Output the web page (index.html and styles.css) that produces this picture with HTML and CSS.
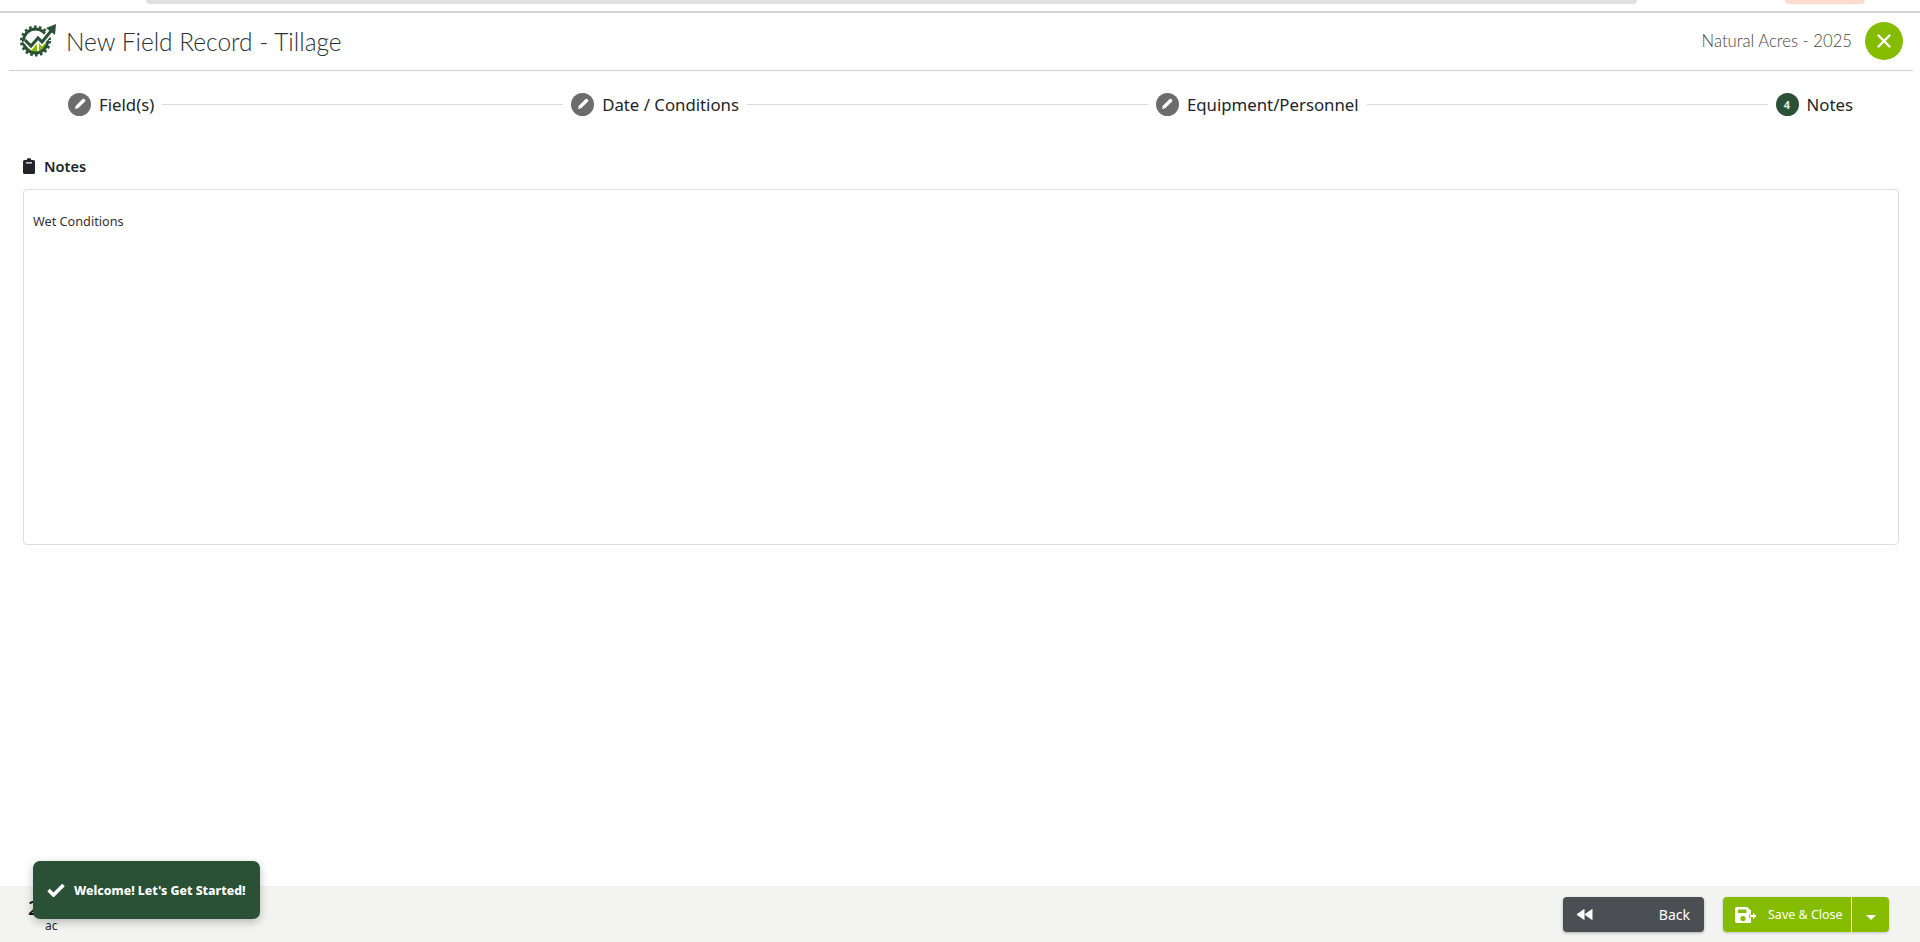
FILE: index.html
```html
<!DOCTYPE html>
<html lang="en">
<head>
    <meta charset="UTF-8">
    <title>New Field Record - Tillage</title>
    <link rel="stylesheet" href="styles.css">
</head>
<body>
<div class="container">
    <div class="top-strip">
        <span class="pill-grey"></span>
        <span class="pill-peach"></span>
    </div>
    <header>
        <svg class="logo" viewBox="0 0 40 34" width="40" height="34">
            <path d="M9 25 L9 20 L13 22 L16 24 L19 18 L19 30 Q13 30 9 25Z M21 17 L24 20 L27 17 L27 25 Q24 29 21 30Z" fill="#85bc00"/>
            <circle cx="17.5" cy="18" r="12" fill="none" stroke="#2a5135" stroke-width="3"/>
            <circle cx="17.5" cy="18" r="14.2" fill="none" stroke="#2a5135" stroke-width="2.6" stroke-dasharray="2.6 2.4"/>
            <path d="M7 17 L13 23 L20 15 L24 19 L33 8" fill="none" stroke="#fff" stroke-width="6"/>
            <path d="M7 17 L13 23 L20 15 L24 19 L33 8" fill="none" stroke="#2a5135" stroke-width="3"/>
            <path d="M28 5 L38 1 L37 12Z" fill="#2a5135"/>
        </svg>
        <h1>New Field Record - Tillage</h1>
        <span class="farm">Natural Acres - 2025</span>
        <button class="close-btn">
            <svg viewBox="0 0 16 16" width="16" height="16"><path d="M2.5 2.5 L13.5 13.5 M13.5 2.5 L2.5 13.5" stroke="#fff" stroke-width="2.4" stroke-linecap="round"/></svg>
        </button>
    </header>
    <nav class="stepper">
        <div class="step">
            <span class="step-icon"><svg viewBox="0 0 14 14" width="14" height="14"><path d="M2 12 L2.8 8.8 L9.6 2 Q10.4 1.3 11.2 2 L12 2.8 Q12.7 3.6 12 4.4 L5.2 11.2Z" fill="#fff"/></svg></span>
            <span>Field(s)</span>
        </div>
        <div class="step-line"></div>
        <div class="step">
            <span class="step-icon"><svg viewBox="0 0 14 14" width="14" height="14"><path d="M2 12 L2.8 8.8 L9.6 2 Q10.4 1.3 11.2 2 L12 2.8 Q12.7 3.6 12 4.4 L5.2 11.2Z" fill="#fff"/></svg></span>
            <span>Date / Conditions</span>
        </div>
        <div class="step-line"></div>
        <div class="step">
            <span class="step-icon"><svg viewBox="0 0 14 14" width="14" height="14"><path d="M2 12 L2.8 8.8 L9.6 2 Q10.4 1.3 11.2 2 L12 2.8 Q12.7 3.6 12 4.4 L5.2 11.2Z" fill="#fff"/></svg></span>
            <span>Equipment/Personnel</span>
        </div>
        <div class="step-line"></div>
        <div class="step">
            <span class="step-icon current">4</span>
            <span>Notes</span>
        </div>
    </nav>
    <main>
        <div class="section-title">
            <svg viewBox="0 0 12 16" width="12" height="16"><path d="M1.5 2 H3.6 Q4 0 6 0 Q8 0 8.4 2 H10.5 Q12 2 12 3.5 V14.5 Q12 16 10.5 16 H1.5 Q0 16 0 14.5 V3.5 Q0 2 1.5 2Z M3 4.2 V5.4 H9 V4.2Z" fill="#212529" fill-rule="evenodd"/></svg>
            <span>Notes</span>
        </div>
        <div class="notes-box">Wet Conditions</div>
    </main>
    <footer>
        <div class="acres">
            <span class="acres-num">2</span>
            <span class="acres-unit">ac</span>
        </div>
        <div class="actions">
            <button class="back-btn">
                <svg viewBox="0 0 16 12" width="17" height="13"><path d="M8 0.5 V11.5 L1 6.5 Q0.4 6 1 5.5Z M15.5 0.5 V11.5 L8.5 6.5 Q7.9 6 8.5 5.5Z" fill="#fff"/></svg>
                <span>Back</span>
            </button>
            <div class="save-group">
                <button class="save-btn">
                    <svg viewBox="0 0 22 16" width="22" height="16"><path d="M2 0 H12 L16 3.5 V7.5 H14 V10.5 H16 V16 H2 Q0 16 0 14 V2 Q0 0 2 0Z M3 2.5 V6 H11.5 V2.5Z M8 9 A2.6 2.6 0 1 0 8.01 9Z" fill="#fff" fill-rule="evenodd"/><path d="M15 8 H18 V6 L21.5 9 L18 12 V10 H15Z" fill="#fff"/></svg>
                    <span>Save &amp; Close</span>
                </button>
                <button class="caret-btn"><span class="caret"></span></button>
            </div>
        </div>
    </footer>
    <div class="toast">
        <svg viewBox="0 0 18 14" width="18" height="14"><path d="M1.5 7 L6.5 12 L16.5 2" fill="none" stroke="#fff" stroke-width="3.6"/></svg>
        <span>Welcome! Let's Get Started!</span>
    </div>
</div>
</body>
</html>
```

FILE: styles.css
```css
* {
    box-sizing: border-box;
    padding: 0;
    margin: 0;
}

body {
    font-family: "Noto Sans", "Liberation Sans", sans-serif;
    color: #212529;
    background: #fff;
    overflow: hidden;
}

button {
    border: none;
    font-family: inherit;
    color: white;
}

.container {
    display: flex;
    flex-direction: column;
    height: 100vh;
    position: relative;
}

.top-strip {
    height: 13px;
    flex-shrink: 0;
    display: flex;
    align-items: flex-start;
    padding-left: 146px;
    border-bottom: 2px solid #d4d4d4;
}

.pill-grey {
    width: 1491px;
    height: 4px;
    background: #e0e0e0;
    border-radius: 0 0 20px 20px;
}

.pill-peach {
    width: 80px;
    height: 4px;
    margin-left: 148px;
    background: #fddccd;
    border-radius: 0 0 20px 20px;
}

header {
    display: flex;
    align-items: center;
    height: 58px;
    flex-shrink: 0;
    margin: 0 7px 0 9px;
    padding: 0 10px 1px 9px;
    border-bottom: 1px solid #cfcfcf;
}

.logo {
    margin-top: -2px;
}

h1 {
    font-family: "Lato", sans-serif;
    font-weight: 300;
    font-size: 24.5px;
    margin-left: 8px;
    color: #2b3038;
    flex: 1;
}

.farm {
    font-family: "Lato", sans-serif;
    font-weight: 300;
    font-size: 16.7px;
    color: #4a4740;
    margin-right: 13px;
}

.close-btn {
    width: 38px;
    height: 38px;
    border-radius: 50%;
    background: #85bc00;
    display: flex;
    align-items: center;
    justify-content: center;
}

.stepper {
    display: flex;
    align-items: center;
    height: 66px;
    flex-shrink: 0;
    padding: 0 67px 0 68px;
}

.step {
    display: flex;
    align-items: center;
    gap: 8px;
    font-size: 16.8px;
}

.step-line {
    flex: 1;
    height: 1px;
    background: #dcdcdc;
    margin: 0 8px;
}

.step-icon {
    width: 23px;
    height: 23px;
    border-radius: 50%;
    background: #6c6c6c;
    display: flex;
    align-items: center;
    justify-content: center;
    color: #e4e9e5;
    font-size: 11px;
    font-weight: 700;
}

.step-icon.current {
    background: #2a5135;
}

main {
    flex: 1;
    padding: 0 21px 0 23px;
}

.section-title {
    display: flex;
    align-items: center;
    gap: 9px;
    font-size: 14.6px;
    font-weight: 600;
    height: 22px;
    margin-top: 18px;
    margin-bottom: 12px;
}

.notes-box {
    height: 356px;
    border: 1px solid #dedede;
    border-radius: 4px;
    padding: 22px 9px;
    font-size: 12.7px;
    color: #333;
}

footer {
    display: flex;
    align-items: center;
    justify-content: space-between;
    height: 56px;
    flex-shrink: 0;
    background: #f3f3f1;
    padding: 1px 31px 0 28px;
}

.acres {
    display: flex;
    flex-direction: column;
}

.acres-num {
    font-size: 20px;
    line-height: 22px;
    font-weight: 500;
    color: #111;
}

.acres-unit {
    font-size: 12px;
    line-height: 14px;
    margin-left: 17px;
}

.actions {
    display: flex;
    gap: 19px;
}

.back-btn {
    display: flex;
    align-items: center;
    justify-content: space-between;
    width: 141px;
    height: 35px;
    padding: 0 14px 0 13px;
    background: #4b4e53;
    border-radius: 4px;
    font-size: 14px;
    box-shadow: 0 1px 3px rgba(0, 0, 0, 0.3);
}

.save-group {
    display: flex;
    height: 35px;
    border-radius: 4px;
    box-shadow: 0 1px 3px rgba(0, 0, 0, 0.2);
}

.save-btn {
    display: flex;
    align-items: center;
    gap: 11px;
    width: 129px;
    padding-left: 12px;
    background: #85bc00;
    border-radius: 4px 0 0 4px;
    border-right: 1px solid #fff;
    font-size: 12.5px;
}

.caret-btn {
    width: 37px;
    background: #85bc00;
    border-radius: 0 4px 4px 0;
}

.caret {
    display: inline-block;
    border-left: 5px solid transparent;
    border-right: 5px solid transparent;
    border-top: 5px solid #fff;
}

.toast {
    position: absolute;
    left: 33px;
    top: 861px;
    width: 227px;
    height: 58px;
    display: flex;
    align-items: center;
    gap: 9px;
    padding-left: 14px;
    background: #2a5135;
    color: white;
    border-radius: 7px;
    font-size: 12.3px;
    font-weight: 800;
    box-shadow: 0 3px 10px rgba(0, 0, 0, 0.25);
}
```
